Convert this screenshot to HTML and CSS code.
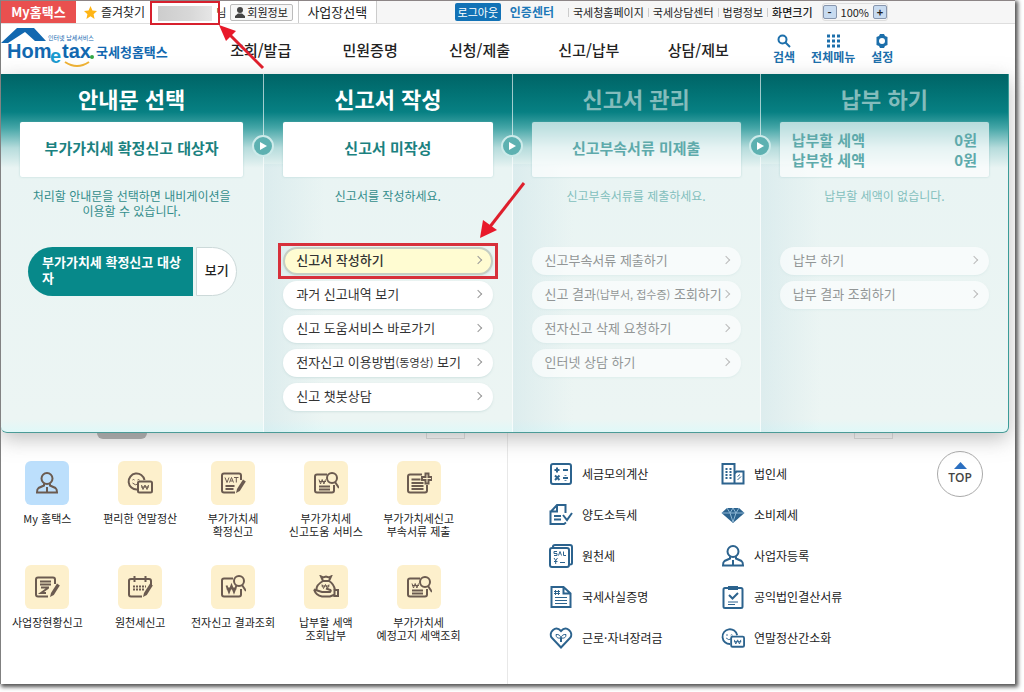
FILE: index.html
```html
<!DOCTYPE html>
<html lang="ko">
<head>
<meta charset="utf-8">
<title>국세청홈택스</title>
<link rel="stylesheet" href="styles.css">
</head>
<body>
<svg class="defs" aria-hidden="true">
  <defs>
    <symbol id="person" viewBox="0 0 24 24"><circle cx="12" cy="7.500" r="5.500"/><path d="M9 12.500v2L3.500 17Q2 18 2 21.500h20q0-3.500-1.500-4.500L15 14.500v-2M12 16v5"/></symbol>
    <symbol id="face" viewBox="0 0 26 24"><path d="M10 18.500A8 8 0 1 1 17.500 9"/><path class="thin" d="M5.500 9q1-1 2 0M10.500 9q1-1 2 0M5.500 12q3 3 5.500 1"/><rect x="11" y="10.500" width="14" height="11" rx="1.500"/><path class="thin" d="M14.500 14l1.500 4.500 2-4.500 2 4.500 1.500-4.500M14 16h8"/></symbol>
    <symbol id="pen" viewBox="0 0 26 24"><path class="solid" d="M16 22l1-4 6-9.500 2.800 1.900-6 9.500z"/></symbol>
    <symbol id="vat" viewBox="0 0 26 24"><path d="M15 21.500H4Q2 21.500 2 19.500v-15Q2 2.500 4 2.500h15q2 0 2 2V9M5.500 15h9M5.500 18h8"/><path class="thin" d="M5 6.500l2 5 2-5M9.500 11.500l2-5 2 5M10.500 10h2M14 6.500h4.500M16.300 6.500v5"/></symbol>
    <symbol id="report" viewBox="0 0 26 24"><path d="M14 21.500H4Q2 21.500 2 19.500v-15Q2 2.500 4 2.500h15q2 0 2 2V9M6 6.500h11M6 9.500h11M7 12.500h8M14 13l-7 5h5"/></symbol>
    <symbol id="calendar" viewBox="0 0 26 24"><path d="M15 21.500H4Q2 21.500 2 19.500V5.500Q2 4 4 4h18q2 0 2 2v4M7.500 1v6M18.500 1v6"/><path class="dash" d="M6 11.500h13M6 14.500h11"/></symbol>
    <symbol id="wonsearch" viewBox="0 0 26 24"><path d="M14 3.500H4Q2 3.500 2 5.500v14q0 2 2 2h15q2 0 2-2V14M6 15.500h11M6 18.500h11"/><circle cx="19" cy="7" r="5"/><path d="M22 11l4 6"/><path class="thin" d="M6 8.500l1.500 4.500 1.700-4.500 1.700 4.500L12.500 8.500M6 10.500h7"/></symbol>
    <symbol id="wonfind" viewBox="0 0 26 24"><path d="M13 3.500H4Q2 3.500 2 5.500v14q0 2 2 2h15q2 0 2-2V14"/><circle cx="19" cy="6" r="5"/><path d="M22 10l4 6"/><path d="M6.500 10.500L9 17l2.500-6.500L14 17l2.500-6.500M6.500 13.500h10"/></symbol>
    <symbol id="pageplus" viewBox="0 0 26 24"><path d="M16 3.500H4Q2 3.500 2 5.500v14q0 2 2 2h15q2 0 2-2V14M5.500 8.500h9M5.500 12h12M5.500 15h12M5.500 18h12"/><path d="M19.500 2.500h3v3.500h3.500v3h-3.500v3.500h-3V9H16V6h3.500z"/></symbol>
    <symbol id="bag" viewBox="0 0 26 24"><path d="M8 1.500l2 1 3-1 3 1 2-1-2 4.500H10zM10 6Q3 10 3.500 15M16 6q5 3 6 9"/><path d="M1 14.500l8 2.500h8q2-2-1-2.500l-3-1M1 14.500q2 6 8 7h8l5-2M21.500 15H25v6h-3.500z"/><path class="thin" d="M9 9.500l1.500 4 2-4 2 4 1.500-4M8.500 11h8"/></symbol>
    <symbol id="calc" viewBox="0 0 24 24"><rect x="2" y="2" width="20" height="20" rx="2"/><path d="M5.500 8h5M8 5.500v5M14 8h5M6 13.500l4.500 4.500M10.500 13.500L6 18M14 16h5M16.500 13v.8M16.500 18.200v.8"/></symbol>
    <symbol id="docck" viewBox="0 0 24 24"><path d="M1.500 9L8 2h8.500v8M8 2v6.500H1.500V21H15l2-1.500M5 13h7M5 16.500h7M14 12l4 5 5-7"/></symbol>
    <symbol id="sal" viewBox="0 0 24 24"><path d="M4 4V2.500Q4 1 6 1h15q2 0 2 2v16q0 1.500-2 1.500"/><rect x="1" y="4" width="19" height="19" rx="2"/><path class="thin" d="M8 7.500H5v2h3v2H5M9.500 11.500l1.500-4 1.500 4M14.500 7.500v4H17M5 14l1.700 2.500L8.500 14M6.700 16v4M5 17.500h3.500M11 18.500h5"/></symbol>
    <symbol id="doc" viewBox="0 0 24 24"><path d="M2.500 2h12l7 6.500V22h-19zM14.500 2v6.500h7"/><path class="thin" d="M6.500 5v5M9.500 5v5M5 6.500h6M5 8.500h6M6 12.500h12M6 15.500h12M6 18.500h12"/></symbol>
    <symbol id="heart" viewBox="0 0 24 24"><path d="M12 21.500L2.500 11.500C-.5 6 6.500-1 12 5c5.500-6 12.500 1 9.500 6.500z"/><path d="M12 16v-4"/><path class="thin" d="M12 12q-5 1-5-3.500 4-.5 5 3.500M12 12q5 1 5-3.500-4-.5-5 3.500"/></symbol>
    <symbol id="building" viewBox="0 0 24 24"><path d="M1.500 21.500V2h12v19.500zM13.500 21.500v-10l2-2h7v12z"/><path class="thin" d="M16.500 14.500l2.500-2M16.500 18l3.500-3.500"/><path class="dash" d="M5.500 6v11M9.500 6v11"/></symbol>
    <symbol id="gem" viewBox="0 0 24 24"><path class="solid" d="M6 5h12l5.500 5L12 20 .5 10z"/><path class="cut" d="M1 10h22M6 5l3 5 3-5 3 5 3-5M9 10l3 9 3-9"/></symbol>
    <symbol id="clip" viewBox="0 0 24 24"><rect x="2.500" y="3" width="19" height="20" rx="1.500"/><path class="solid" d="M7 1h10v4H7z"/><path d="M8 10l3.500 3.500L17 8"/><path class="thin" d="M7 17h10M7 19.500h7"/></symbol>
  </defs>
</svg>

<div class="window">
  <div class="topbar">
    <div class="topbar-left">
      <a class="my-tab" href="#">My홈택스</a>
      <a class="favorite" href="#"><svg width="13" height="13" viewBox="0 0 24 24"><path d="M12 0l3.600 8.200 8.400.8-6.300 6 1.800 8.800L12 19l-7.500 4.800L6.300 15 0 9l8.400-.8z"/></svg>즐겨찾기</a>
      <span class="user-mark"><span class="user-blur"></span>
        <svg class="arrow-user" width="48" height="48" viewBox="0 0 48 48"><path class="shaft" d="M44 44L10 10"/><path class="head" d="M0 1l17 6L7 17z"/></svg>
      </span>
      <span class="honorific">님</span>
      <button class="member"><svg width="10" height="11" viewBox="0 0 10 11"><circle cx="5" cy="3" r="3"/><path d="M0 11V9l3-2.500h4L10 9v2z"/></svg>회원정보</button>
      <button class="office">사업장선택</button>
    </div>
    <div class="topbar-right">
      <button class="logout">로그아웃</button>
      <a class="cert" href="#">인증센터</a>
      <a class="util" href="#">국세청홈페이지</a>
      <a class="util" href="#">국세상담센터</a>
      <a class="util" href="#">법령정보</a>
      <span class="util strong">화면크기</span>
      <span class="zoom"><button aria-label="축소">-</button>100%<button aria-label="확대">+</button></span>
    </div>
  </div>

  <header class="header">
    <a class="logo" href="#" aria-label="국세청홈택스">
      <svg width="170" height="42" viewBox="0 0 170 42">
        <path fill="#1268b0" d="M0 17L16 2h17l12 13H34L24 6 7 17z"/>
        <text class="logo-tiny" x="47" y="14">인터넷 납세서비스</text>
        <text class="logo-main" x="6" y="32">Hom</text>
        <text class="logo-e" x="49" y="37">e</text>
        <text class="logo-main" x="61" y="32">tax</text>
        <circle cx="91" cy="31" r="2" fill="#35a845"/>
        <path d="M64 36q12 8 24 0" fill="none" stroke="#f0b232" stroke-width="2"/>
        <text class="logo-ko" x="95" y="31">국세청홈택스</text>
      </svg>
    </a>
    <nav class="gnb">
      <a href="#">조회/발급</a><a href="#">민원증명</a><a href="#">신청/제출</a><a href="#">신고/납부</a><a href="#">상담/제보</a>
    </nav>
    <div class="tools">
      <a href="#"><svg width="14" height="14" viewBox="0 0 14 14"><circle cx="5.500" cy="5.500" r="4"/><path d="M8.500 8.500l4.500 4.500"/></svg>검색</a>
      <a href="#"><svg width="14" height="14" viewBox="0 0 14 14"><path class="dots" d="M1 2h13M1 7h13M1 12h13"/></svg>전체메뉴</a>
      <a href="#"><svg width="14" height="14" viewBox="0 0 14 14"><path class="gear" d="M5 0h4l1 2 2.500 1v8L10 12l-1 2H5l-1-2-2.500-1V3L4 2z"/><circle class="hole" cx="7" cy="7" r="3"/></svg>설정</a>
    </div>
  </header>

  <section class="guide">
    <div class="step">
      <h2>안내문 선택</h2>
      <div class="status">부가가치세 확정신고 대상자</div>
      <p class="note">처리할 안내문을 선택하면 내비게이션을<br>이용할 수 있습니다.</p>
      <div class="notice">
        <button class="notice-name">부가가치세 확정신고 대상자</button>
        <button class="notice-view">보기</button>
      </div>
    </div>
    <div class="step">
      <span class="next"></span>
      <h2>신고서 작성</h2>
      <div class="status">신고서 미작성</div>
      <p class="note">신고서를 작성하세요.</p>
      <div class="actions">
        <div class="marked">
          <button class="current"><span>신고서 작성하기</span></button>
          <svg class="arrow-action" width="46" height="60" viewBox="0 0 46 60"><path class="shaft" d="M44 2L9 47"/><path class="head" d="M0 57l3-18 14 10z"/></svg>
        </div>
        <button><span>과거 신고내역 보기</span></button>
        <button><span>신고 도움서비스 바로가기</span></button>
        <button><span>전자신고 이용방법<small>(동영상)</small> 보기</span></button>
        <button><span>신고 챗봇상담</span></button>
      </div>
    </div>
    <div class="step inactive">
      <span class="next"></span>
      <h2>신고서 관리</h2>
      <div class="status">신고부속서류 미제출</div>
      <p class="note">신고부속서류를 제출하세요.</p>
      <div class="actions">
        <button><span>신고부속서류 제출하기</span></button>
        <button><span>신고 결과<small>(납부서, 접수증)</small> 조회하기</span></button>
        <button><span>전자신고 삭제 요청하기</span></button>
        <button><span>인터넷 상담 하기</span></button>
      </div>
    </div>
    <div class="step inactive">
      <span class="next"></span>
      <h2>납부 하기</h2>
      <dl class="status amounts">
        <div><dt>납부할 세액</dt><dd>0원</dd></div>
        <div><dt>납부한 세액</dt><dd>0원</dd></div>
      </dl>
      <p class="note">납부할 세액이 없습니다.</p>
      <div class="actions">
        <button><span>납부 하기</span></button>
        <button><span>납부 결과 조회하기</span></button>
      </div>
    </div>
  </section>

  <main class="content">
    <section class="quick">
      <div class="peek"><span class="pill"></span><span class="tag"></span></div>
      <div class="quick-grid">
        <a class="mine" href="#"><i><svg><use href="#person"/></svg></i>My 홈택스</a>
        <a href="#"><i><svg><use href="#face"/></svg></i>편리한 연말정산</a>
        <a href="#"><i><svg><use href="#vat"/><use href="#pen"/></svg></i>부가가치세<br>확정신고</a>
        <a href="#"><i><svg><use href="#wonsearch"/></svg></i>부가가치세<br>신고도움 서비스</a>
        <a href="#"><i><svg><use href="#pageplus"/></svg></i>부가가치세신고<br>부속서류 제출</a>
        <a href="#"><i><svg><use href="#report"/><use href="#pen"/></svg></i>사업장현황신고</a>
        <a href="#"><i><svg><use href="#calendar"/><use href="#pen"/></svg></i>원천세신고</a>
        <a href="#"><i><svg><use href="#wonfind"/></svg></i>전자신고 결과조회</a>
        <a href="#"><i><svg><use href="#bag"/></svg></i>납부할 세액<br>조회납부</a>
        <a href="#"><i><svg><use href="#wonsearch"/></svg></i>부가가치세<br>예정고지 세액조회</a>
      </div>
    </section>
    <section class="taxes">
      <div class="peek"><span class="tag"></span></div>
      <div class="tax-grid">
        <a href="#"><svg><use href="#calc"/></svg>세금모의계산</a>
        <a href="#"><svg><use href="#building"/></svg>법인세</a>
        <a href="#"><svg><use href="#docck"/></svg>양도소득세</a>
        <a href="#"><svg><use href="#gem"/></svg>소비제세</a>
        <a href="#"><svg><use href="#sal"/></svg>원천세</a>
        <a href="#"><svg><use href="#person"/></svg>사업자등록</a>
        <a href="#"><svg><use href="#doc"/></svg>국세사실증명</a>
        <a href="#"><svg><use href="#clip"/></svg>공익법인결산서류</a>
        <a href="#"><svg><use href="#heart"/></svg>근로·자녀장려금</a>
        <a href="#"><svg><use href="#face"/></svg>연말정산간소화</a>
      </div>
    </section>
    <a class="to-top" href="#"><svg width="13" height="7" viewBox="0 0 13 7"><path d="M6.500 0L13 7H0z"/></svg>TOP</a>
  </main>
</div>
</body>
</html>
```
FILE: styles.css
```css
* { box-sizing: border-box; }

body {
  margin: 0;
  background: #fff;
  color: #222;
  font: 12px/16px "Noto Sans CJK KR", sans-serif;
}

a { color: inherit; text-decoration: none; }

button {
  margin: 0;
  padding: 0;
  border: 0;
  background: none;
  color: inherit;
  font: inherit;
}

h2, p, dl, dd { margin: 0; }
.defs { position: absolute; width: 0; height: 0; }

.window {
  display: flex;
  flex-direction: column;
  min-height: calc(100vh - 8px);
  margin: 0 9px 8px 0;
  border-top: 1px solid #8c8586;
  border-left: 1px solid #808080;
  background: #fff;
  box-shadow: 2px 2px 4px 1px #555;
}

/* Top bar */
.topbar {
  display: flex;
  height: 23px;
  border-bottom: 1px solid #dedede;
  background: #f6f6f6;
  font-size: 11px;
  white-space: nowrap;
}
.topbar-left { display: flex; align-items: center; background: #fff; }
.my-tab {
  width: 75px;
  align-self: stretch;
  background: #e9504f;
  color: #fff;
  font-size: 13px;
  font-weight: 700;
  line-height: 21px;
  text-align: center;
}
.favorite { display: flex; align-items: center; gap: 4px; margin: 0 5px 0 8px; font-size: 12px; }
.favorite svg { fill: #ffb515; }
.user-mark {
  position: relative;
  z-index: 3;
  width: 70px;
  height: 24px;
  margin-top: 2px;
  padding: 3px 6px;
  border: 2px solid #d7202d;
}
.user-blur { display: block; height: 15px; background: linear-gradient(90deg, #cdcdcd, #d8d8d8 60%, #e6e6e6); }
.honorific { margin: 0 4px 0 -4px; }
.arrow-user, .arrow-action { position: absolute; }
.arrow-user { top: 21px; left: 67px; }
.shaft { fill: none; stroke: #de1f2c; stroke-width: 3; }
.head { fill: #e8192a; }
.member {
  display: flex;
  align-items: center;
  gap: 2px;
  height: 17px;
  margin-right: 5px;
  padding: 0 4px;
  border: 1px solid #bbb;
  border-radius: 2px;
  background: #f7f7f7;
}
.member svg { fill: #444; }
.office { align-self: stretch; width: 79px; border: solid #ccc; border-width: 0 1px; font-size: 13px; line-height: 20px; }
.topbar-right { display: flex; align-items: center; margin-left: auto; margin-right: 127px; }
.logout { width: 46px; height: 18px; border-radius: 2px; background: #1272b6; color: #fff; }
.cert { margin: 0 14px 0 9px; color: #1c78b8; font-size: 12px; font-weight: 700; }
.util { display: flex; align-items: center; margin-right: 4px; }
.util::before { width: 1px; height: 9px; margin-right: 4px; background: #ccc; content: ""; }
.strong { font-weight: 500; }
.zoom { display: flex; align-items: center; gap: 4px; margin-left: 5px; border: 1px solid #ddd; border-radius: 3px; }
.zoom button { width: 14px; height: 14px; border: 1px solid #8796ae; border-radius: 2px; background: #c8dbf0; font-weight: 700; line-height: 10px; }

/* Header */
.header { display: flex; align-items: center; height: 50px; }
.logo { flex: 0 0 205px; height: 46px; }
.logo text { fill: #1268b0; }
.logo-main { font: 700 20px "Liberation Sans", sans-serif; }
.logo .logo-e { fill: #1a9bd0; font: 700 20px "Liberation Sans", sans-serif; }
.logo-tiny { font-size: 6px; }
.logo-ko { font-size: 13px; font-weight: 700; }
.gnb { display: grid; flex: 0 1 547px; grid-template-columns: repeat(5, 1fr); padding-top: 2px; font-size: 15px; font-weight: 500; text-align: center; white-space: nowrap; }
.tools { display: flex; gap: 16px; margin-left: 20px; color: #1c6fab; font-weight: 700; white-space: nowrap; }
.tools a { display: flex; flex-direction: column; align-items: center; gap: 1px; }
.tools svg { fill: none; stroke: #1c6fab; stroke-width: 2; }
.dots { stroke-width: 3; stroke-dasharray: 3 2; }
.tools .gear { fill: #1c6fab; stroke: none; }
.tools .hole { fill: #fff; stroke: none; }

/* Filing guide */
.guide {
  position: relative;
  z-index: 2;
  display: grid;
  grid-template-columns: 262fr 248fr 248fr 248fr;
  min-height: 359px;
  margin-right: 6px;
  border-right: 1px solid #3a9c98;
  border-bottom: 1px solid #4b9b97;
  border-radius: 0 0 6px 6px;
  background: linear-gradient(#006466, #027375 20px, #078083 38px, #45a6a7 54px, #b6dcdc 74px, #e9f4f3 94px, #ecf5f3 345px, #e0f8f8);
  box-shadow: 0 6px 20px #8888;
}
.step { position: relative; padding: 0 19px 20px 19px; }
.step:first-child { padding-right: 20px; }
.step + .step {
  border-left: 1px solid #ffffffa0;
  background: linear-gradient(90deg, #c5dfe560, #d8ebef00 60px) 0 90px no-repeat;
}
.step h2 { color: #fff; font-size: 22px; font-weight: 700; line-height: 48px; height: 48px; text-align: center; }
.status {
  display: flex;
  align-items: center;
  justify-content: center;
  height: 55px;
  padding-bottom: 3px;
  border-radius: 2px;
  background: #fff;
  box-shadow: 0 0 2px #79b9b980;
  color: #1b8180;
  font-size: 15px;
  font-weight: 700;
}
.note { height: 70px; padding-top: 11px; color: #338d8b; line-height: 15px; text-align: center; white-space: nowrap; }
.next {
  position: absolute;
  top: 61px;
  left: -12px;
  width: 22px;
  height: 22px;
  border: 2px solid #cdebea;
  border-radius: 50%;
  background: #5db1b1;
}
.next::after { position: absolute; top: 5px; left: 6px; border: solid transparent; border-width: 4px 0 4px 7px; border-left-color: #fff; content: ""; }
.actions { display: flex; flex-direction: column; gap: 6px; font-size: 13px; white-space: nowrap; }
.actions button {
  display: flex;
  align-items: center;
  justify-content: space-between;
  width: 100%;
  height: 28px;
  padding: 0 12px 2px 13px;
  border-radius: 14px;
  background: #fff;
  box-shadow: 0 1px 2px #b7d2d280;
  color: #333;
}
.actions button::after { width: 5px; height: 5px; border: solid #999; border-width: 1px 1px 0 0; transform: rotate(45deg); content: ""; }
.actions small { font-size: 11px; }
.marked { position: relative; }
.marked::after { position: absolute; inset: -4px -5px; border: 3px solid #d7303b; content: ""; pointer-events: none; }
.actions .current { border: 2px solid #c5cec4; background: #fffcd2; padding: 0 10px 2px 11px; font-weight: 500; }
.arrow-action { z-index: 1; top: -66px; right: -33px; }
.notice { display: flex; gap: 3px; height: 49px; margin: 0 6px 0 8px; }
.notice-name { flex: 1; padding: 0 6px 3px 14px; border-radius: 25px 0 0 25px; background: #07898a; color: #fff; font-size: 13px; font-weight: 700; text-align: left; }
.notice-view { width: 41px; padding-bottom: 3px; border: 1px solid #ccd9d9; border-radius: 0 25px 25px 0; background: #fff; font-size: 13px; font-weight: 500; }
.inactive h2 { color: #84bcbc; }
.inactive .status { background: #ffffffa8; color: #5eaaab; }
.inactive .note { color: #82bfbd; }
.inactive .actions button { background: #ffffffa0; color: #929696; box-shadow: 0 1px 2px #c7dede60; }
.inactive .actions button::after { border-color: #bbb; }
.amounts { flex-direction: column; padding: 0 12px; line-height: 20px; }
.amounts div { display: flex; justify-content: space-between; width: 100%; }

/* Shortcuts */
.content { position: relative; display: flex; flex: 1; }
.quick { width: 507px; border-right: 1px solid #e8e8e8; padding-right: 42px; }
.peek { display: flex; justify-content: space-between; height: 6px; margin-bottom: 22px; }
.pill { width: 50px; height: 6px; margin-left: 96px; border-radius: 0 0 6px 6px; background: #aaa; }
.tag { width: 39px; border: 1px solid #ddd; border-top: 0; }
.quick-grid { display: grid; grid-template-columns: repeat(5, 1fr); grid-auto-rows: 104px; font-size: 11px; line-height: 13px; text-align: center; white-space: nowrap; }
.quick-grid a { display: flex; flex-direction: column; align-items: center; }
.quick-grid i { display: grid; width: 44px; height: 44px; margin-bottom: 7px; border-radius: 6px; background: #fdf0cc; place-items: center; }
.quick-grid .mine i { background: #bcdffc; }
.quick-grid svg { width: 26px; height: 24px; fill: none; stroke: #6b5b50; stroke-width: 2; }
.solid { fill: #6b5b50; stroke: none; }
.thin { stroke-width: 1; }
.dash { stroke-dasharray: 2 1; }
.taxes { flex: 1; }
.taxes .peek { justify-content: flex-start; margin-bottom: 14px; padding-left: 346px; }
.tax-grid { display: grid; grid-template-columns: 172px 172px; grid-auto-rows: 41px; padding-left: 41px; white-space: nowrap; }
.tax-grid a { display: flex; align-items: center; gap: 9px; }
.tax-grid svg { width: 24px; height: 24px; fill: none; stroke: #2c638e; stroke-width: 2; }
#gem .solid, #clip .solid { fill: #2c638e; }
.cut { stroke: #8db6d4; stroke-width: 1; }
.to-top {
  position: absolute;
  top: 18px;
  right: 32px;
  display: flex;
  flex-direction: column;
  align-items: center;
  justify-content: center;
  gap: 1px;
  width: 46px;
  height: 46px;
  border: 1px solid #aaa;
  border-radius: 50%;
  background: #fff;
  color: #444;
  font: 600 12px/16px "Open Sans", sans-serif;
}
.to-top svg { fill: #2b6fc0; }
```
